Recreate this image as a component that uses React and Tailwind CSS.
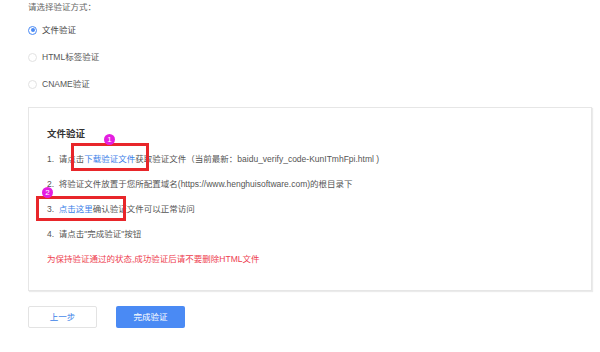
export default function App() {
  const font = { fontFamily: '"Liberation Sans", "Noto Sans CJK SC", sans-serif' };
  return (
    <div
      className="relative h-[352px] w-[600px] overflow-hidden bg-white pl-[28px] pr-[8px] text-[8.5px] text-[#555]"
      style={font}
    >
      <div className="h-[14px] leading-[14px] text-[#666]">请选择验证方式：</div>

      <div className="mt-[9px] flex flex-col gap-[13px]">
        <label className="flex h-[14px] items-center gap-[5px]">
          <span className="flex h-[9px] w-[9px] items-center justify-center rounded-full border border-[#4a8af4]">
            <span className="h-[4px] w-[4px] rounded-full bg-[#4a8af4]" />
          </span>
          <span className="text-[#444]">文件验证</span>
        </label>
        <label className="flex h-[14px] items-center gap-[5px]">
          <span className="h-[9px] w-[9px] rounded-full border border-[#e2e2e2]" />
          <span className="text-[#555]">HTML标签验证</span>
        </label>
        <label className="flex h-[14px] items-center gap-[5px]">
          <span className="h-[9px] w-[9px] rounded-full border border-[#e2e2e2]" />
          <span className="text-[#555]">CNAME验证</span>
        </label>
      </div>

      <div className="mt-[16px] h-[184px] border border-[#e6e6e6] pl-[18px] pt-[19px] shadow-[1px_1px_1px_rgba(0,0,0,0.08)]">
        <div className="h-[14px] text-[9.5px] font-bold leading-[14px] text-[#333]">文件验证</div>
        <div className="mt-[11px] flex flex-col gap-[11px] leading-[14px]">
          <div className="h-[14px]">
            1.&nbsp;&nbsp;请点击<span className="text-[#3a7ee8]">下载验证文件</span>获取验证文件（当前最新：baidu_verify_code-KunITmhFpi.html )
          </div>
          <div className="h-[14px]">
            2.&nbsp;&nbsp;将验证文件放置于您所配置域名(https://www.henghuisoftware.com)的根目录下
          </div>
          <div className="h-[14px]">
            3.&nbsp;&nbsp;<span className="text-[#3a7ee8]">点击这里</span>确认验证文件可以正常访问
          </div>
          <div className="h-[14px]">4.&nbsp;&nbsp;请点击"完成验证"按钮</div>
          <div className="h-[14px] text-[#ee4050]">为保持验证通过的状态,成功验证后请不要删除HTML文件</div>
        </div>
      </div>

      <div className="mt-[15px] flex gap-[19px]">
        <button className="h-[22px] w-[69px] rounded-[2px] border border-[#e3e3e3] bg-white text-[8.5px] text-[#3a7ee8]">
          上一步
        </button>
        <button className="h-[22px] w-[69px] rounded-[2px] bg-[#4a8af4] text-[8.5px] text-white">
          完成验证
        </button>
      </div>

      {/* annotations */}
      <div className="absolute left-[71px] top-[143px] h-[28px] w-[78px] border-[3px] border-[#e8262a]" />
      <div className="absolute left-[104px] top-[134px] flex h-[11px] w-[11px] items-center justify-center rounded-full bg-[#e41ee0] text-[8px] leading-none text-white">
        1
      </div>
      <div className="absolute left-[36px] top-[196px] h-[25px] w-[90px] border-[3px] border-[#e8262a]" />
      <div className="absolute left-[42px] top-[187px] flex h-[11px] w-[11px] items-center justify-center rounded-full bg-[#e41ee0] text-[8px] leading-none text-white">
        2
      </div>
    </div>
  );
}
